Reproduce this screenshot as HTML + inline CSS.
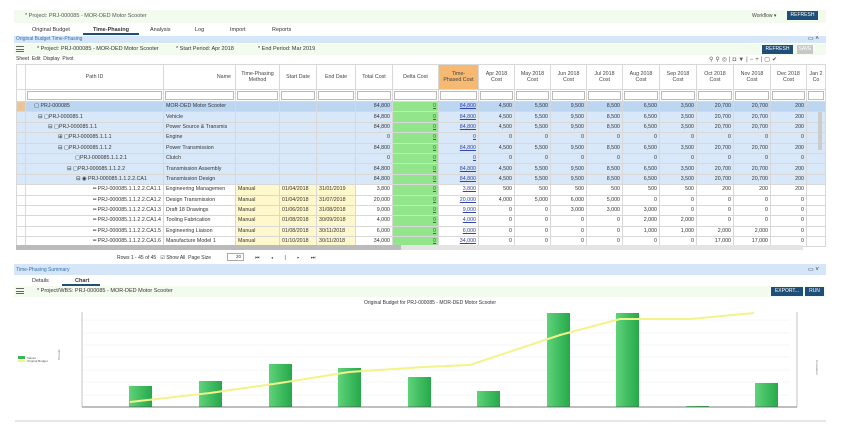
<!DOCTYPE html>
<html><head><meta charset="utf-8"><style>
*{margin:0;padding:0;box-sizing:border-box}
body{width:848px;height:441px;background:#fff;font-family:"Liberation Sans",sans-serif;font-size:5.5px;color:#333;position:relative;overflow:hidden}
.a{position:absolute;white-space:nowrap}
.btn{position:absolute;background:#1f4e79;color:#fff;font-size:5px;text-align:center;line-height:9px}
table{position:absolute;left:16px;top:64px;width:809px;border-collapse:collapse;table-layout:fixed;font-size:5.3px}
td,th{border:1px solid #d8d8d8;overflow:hidden;white-space:nowrap;padding:0 2px}
th{font-weight:normal;height:25px;color:#444;text-align:center;line-height:6.5px;background:#fff;white-space:normal;padding:0 4px}
tr.f td{height:12px;padding:1px}
tr.f td div{border:1px solid #bbb;height:9px;background:#fff}
tr.d td{height:10.4px;text-align:right;line-height:9px}
tr.b td{background:#d9e8f8}
tr.b1 td{background:#bcd6f2}
td.l{text-align:left!important}
td.g{background:#93e58c!important;color:#2a7a2a;text-decoration:underline}
td.u{color:#3344aa;text-decoration:underline}
td.y{background:#fff8cc!important;text-align:left!important}
</style></head><body>
<div class="a" style="left:14px;top:10px;width:812px;height:13px;background:#f3fbef"></div>
<div class="a" style="left:25px;top:13px;color:#555">* Project: PRJ-000085 - MOR-DED Motor Scooter</div>
<div class="a" style="left:752px;top:13px;color:#444;font-size:5px">Workflow ▾</div>
<div class="btn" style="left:787px;top:11px;width:31px">REFRESH</div>
<div class="a" style="left:32px;top:27px">Original Budget</div>
<div class="a" style="left:93px;top:27px;font-weight:bold">Time-Phasing</div>
<div class="a" style="left:83px;top:33px;width:56px;height:2px;background:#1f4e79"></div>
<div class="a" style="left:150px;top:27px">Analysis</div>
<div class="a" style="left:195px;top:27px">Log</div>
<div class="a" style="left:230px;top:27px">Import</div>
<div class="a" style="left:272px;top:27px">Reports</div>
<div class="a" style="left:14px;top:36px;width:812px;height:7px;background:#d5e6f8"></div>
<div class="a" style="left:16px;top:36px;color:#3a6fb0;font-size:5px">Original Budget Time-Phasing</div>
<div class="a" style="left:808px;top:35px;font-size:6px">▭ ˄</div>
<div class="a" style="left:14px;top:44px;width:812px;height:11px;background:#f3fbef"></div>
<div class="a" style="left:16px;top:46px;width:8px;height:6px;border-top:1px solid #666;border-bottom:1px solid #666"><div style="margin-top:1.5px;border-top:1px solid #666"></div></div>
<div class="a" style="left:37px;top:46px">* Project: PRJ-000085 - MOR-DED Motor Scooter</div>
<div class="a" style="left:176px;top:46px">* Start Period: Apr 2018</div>
<div class="a" style="left:258px;top:46px">* End Period: Mar 2019</div>
<div class="btn" style="left:762px;top:45px;width:31px">REFRESH</div>
<div class="btn" style="left:797px;top:45px;width:16px;background:#c8c8c8">SAVE</div>
<div class="a" style="left:16px;top:56px;font-size:5px">Sheet &nbsp;Edit &nbsp;Display &nbsp;Pivot</div>
<div class="a" style="left:709px;top:56px;font-size:6px;color:#555;letter-spacing:2px">⚲⚲◎|◘▼|−+|▢✔</div>
<table>
<colgroup><col style="width:9px"><col style="width:138px"><col style="width:72px"><col style="width:44px"><col style="width:37px"><col style="width:39px"><col style="width:37px"><col style="width:46px"><col style="width:40px"><col style="width:36px"><col style="width:36px"><col style="width:36px"><col style="width:36px"><col style="width:37px"><col style="width:37px"><col style="width:37px"><col style="width:37px"><col style="width:36px"><col style="width:19px"></colgroup>
<tr><th></th><th>Path ID</th><th style="text-align:right">Name</th><th>Time-Phasing Method</th><th>Start Date</th><th>End Date</th><th>Total Cost</th><th>Delta Cost</th><th style="background:#f5b971">Time-Phased Cost</th><th>Apr 2018 Cost</th><th>May 2018 Cost</th><th>Jun 2018 Cost</th><th>Jul 2018 Cost</th><th>Aug 2018 Cost</th><th>Sep 2018 Cost</th><th>Oct 2018 Cost</th><th>Nov 2018 Cost</th><th>Dec 2018 Cost</th><th style="padding:0 1px">Jan 2 Co</th></tr>
<tr class="f"><td></td><td><div></div></td><td><div></div></td><td><div></div></td><td><div></div></td><td><div></div></td><td><div></div></td><td><div></div></td><td><div></div></td><td><div></div></td><td><div></div></td><td><div></div></td><td><div></div></td><td><div></div></td><td><div></div></td><td><div></div></td><td><div></div></td><td><div></div></td><td><div></div></td></tr>
<tr class="d b1"><td style="background:#e8c49a!important"></td><td class="l" style="padding-left:8px">▢ PRJ-000085</td><td class="l">MOR-DED Motor Scooter</td><td></td><td></td><td></td><td>84,800</td><td class="g">0</td><td class="u">84,800</td><td>4,500</td><td>5,500</td><td>9,500</td><td>8,500</td><td>6,500</td><td>3,500</td><td>20,700</td><td>20,700</td><td>200</td><td></td></tr>
<tr class="d b"><td></td><td class="l" style="padding-left:12px">⊟ ▢PRJ-000085.1</td><td class="l">Vehicle</td><td></td><td></td><td></td><td>84,800</td><td class="g">0</td><td class="u">84,800</td><td>4,500</td><td>5,500</td><td>9,500</td><td>8,500</td><td>6,500</td><td>3,500</td><td>20,700</td><td>20,700</td><td>200</td><td></td></tr>
<tr class="d b"><td></td><td class="l" style="padding-left:22px">⊟ ▢PRJ-000085.1.1</td><td class="l">Power Source &amp; Transmis</td><td></td><td></td><td></td><td>84,800</td><td class="g">0</td><td class="u">84,800</td><td>4,500</td><td>5,500</td><td>9,500</td><td>8,500</td><td>6,500</td><td>3,500</td><td>20,700</td><td>20,700</td><td>200</td><td></td></tr>
<tr class="d b"><td></td><td class="l" style="padding-left:32px">⊞ ▢PRJ-000085.1.1.1</td><td class="l">Engine</td><td></td><td></td><td></td><td>0</td><td class="g">0</td><td class="u">0</td><td>0</td><td>0</td><td>0</td><td>0</td><td>0</td><td>0</td><td>0</td><td>0</td><td>0</td><td></td></tr>
<tr class="d b"><td></td><td class="l" style="padding-left:32px">⊟ ▢PRJ-000085.1.1.2</td><td class="l">Power Transmission</td><td></td><td></td><td></td><td>84,800</td><td class="g">0</td><td class="u">84,800</td><td>4,500</td><td>5,500</td><td>9,500</td><td>8,500</td><td>6,500</td><td>3,500</td><td>20,700</td><td>20,700</td><td>200</td><td></td></tr>
<tr class="d b"><td></td><td class="l" style="padding-left:49px">▢PRJ-000085.1.1.2.1</td><td class="l">Clutch</td><td></td><td></td><td></td><td>0</td><td class="g">0</td><td class="u">0</td><td>0</td><td>0</td><td>0</td><td>0</td><td>0</td><td>0</td><td>0</td><td>0</td><td>0</td><td></td></tr>
<tr class="d b"><td></td><td class="l" style="padding-left:41px">⊟ ▢PRJ-000085.1.1.2.2</td><td class="l">Transmission Assembly</td><td></td><td></td><td></td><td>84,800</td><td class="g">0</td><td class="u">84,800</td><td>4,500</td><td>5,500</td><td>9,500</td><td>8,500</td><td>6,500</td><td>3,500</td><td>20,700</td><td>20,700</td><td>200</td><td></td></tr>
<tr class="d b"><td></td><td class="l" style="padding-left:50px">⊟ ◉ PRJ-000085.1.1.2.2.CA1</td><td class="l">Transmission Design</td><td></td><td></td><td></td><td>84,800</td><td class="g">0</td><td class="u">84,800</td><td>4,500</td><td>5,500</td><td>9,500</td><td>8,500</td><td>6,500</td><td>3,500</td><td>20,700</td><td>20,700</td><td>200</td><td></td></tr>
<tr class="d"><td></td><td>━ PRJ-000085.1.1.2.2.CA1.1</td><td class="l">Engineering Managemen</td><td class="y">Manual</td><td class="y">01/04/2018</td><td class="y">31/01/2019</td><td>3,800</td><td class="g">0</td><td class="u">3,800</td><td>500</td><td>500</td><td>500</td><td>500</td><td>500</td><td>500</td><td>200</td><td>200</td><td>200</td><td></td></tr>
<tr class="d"><td></td><td>━ PRJ-000085.1.1.2.2.CA1.2</td><td class="l">Design Transmission</td><td class="y">Manual</td><td class="y">01/04/2018</td><td class="y">31/07/2018</td><td>20,000</td><td class="g">0</td><td class="u">20,000</td><td>4,000</td><td>5,000</td><td>6,000</td><td>5,000</td><td>0</td><td>0</td><td>0</td><td>0</td><td>0</td><td></td></tr>
<tr class="d"><td></td><td>━ PRJ-000085.1.1.2.2.CA1.3</td><td class="l">Draft 18 Drawings</td><td class="y">Manual</td><td class="y">01/06/2018</td><td class="y">31/08/2018</td><td>9,000</td><td class="g">0</td><td class="u">9,000</td><td>0</td><td>0</td><td>3,000</td><td>3,000</td><td>3,000</td><td>0</td><td>0</td><td>0</td><td>0</td><td></td></tr>
<tr class="d"><td></td><td>━ PRJ-000085.1.1.2.2.CA1.4</td><td class="l">Tooling Fabrication</td><td class="y">Manual</td><td class="y">01/08/2018</td><td class="y">30/09/2018</td><td>4,000</td><td class="g">0</td><td class="u">4,000</td><td>0</td><td>0</td><td>0</td><td>0</td><td>2,000</td><td>2,000</td><td>0</td><td>0</td><td>0</td><td></td></tr>
<tr class="d"><td></td><td>━ PRJ-000085.1.1.2.2.CA1.5</td><td class="l">Engineering Liaison</td><td class="y">Manual</td><td class="y">01/08/2018</td><td class="y">30/11/2018</td><td>6,000</td><td class="g">0</td><td class="u">6,000</td><td>0</td><td>0</td><td>0</td><td>0</td><td>1,000</td><td>1,000</td><td>2,000</td><td>2,000</td><td>0</td><td></td></tr>
<tr class="d"><td></td><td>━ PRJ-000085.1.1.2.2.CA1.6</td><td class="l">Manufacture Model 1</td><td class="y">Manual</td><td class="y">01/10/2018</td><td class="y">30/11/2018</td><td>34,000</td><td class="g">0</td><td class="u">34,000</td><td>0</td><td>0</td><td>0</td><td>0</td><td>0</td><td>0</td><td>17,000</td><td>17,000</td><td>0</td><td></td></tr>
</table>
<div class="a" style="left:16px;top:245px;width:385px;height:5px;background:#bbb"></div>
<div class="a" style="left:401px;top:245px;width:402px;height:5px;background:#e4e4e4"></div>
<div class="a" style="left:818px;top:112px;width:4px;height:38px;background:#ccc"></div>
<div class="a" style="left:117px;top:255px;font-size:5px">Rows 1 - 45 of 45 &nbsp; ☑ Show All &nbsp;Page Size</div>
<div class="a" style="left:227px;top:253px;width:17px;height:8px;border:1px solid #aaa;font-size:4.5px;text-align:right;padding-right:2px">20</div>
<div class="a" style="left:255px;top:255px;font-size:5px;letter-spacing:5px">⏮ ◂ | ▸ ⏭</div>
<div class="a" style="left:14px;top:264px;width:812px;height:11px;background:#d5e6f8"></div>
<div class="a" style="left:16px;top:267px;color:#3a6fb0;font-size:5px">Time-Phasing Summary</div>
<div class="a" style="left:808px;top:266px;font-size:6px">▭ ˅</div>
<div class="a" style="left:32px;top:278px">Details</div>
<div class="a" style="left:75px;top:278px;font-weight:bold">Chart</div>
<div class="a" style="left:62px;top:284px;width:38px;height:2px;background:#1f4e79"></div>
<div class="a" style="left:14px;top:286px;width:812px;height:11px;background:#f3fbef"></div>
<div class="a" style="left:16px;top:288px;width:8px;height:6px;border-top:1px solid #666;border-bottom:1px solid #666"><div style="margin-top:1.5px;border-top:1px solid #666"></div></div>
<div class="a" style="left:37px;top:288px">* Project/WBS: PRJ-000085 - MOR-DED Motor Scooter</div>
<div class="btn" style="left:771px;top:287px;width:32px">EXPORT...</div>
<div class="btn" style="left:805px;top:287px;width:19px">RUN</div>
<svg class="a" style="left:0;top:0" width="848" height="441">
<text x="430" y="304" font-size="5" text-anchor="middle" fill="#333" font-family="Liberation Sans">Original Budget for PRJ-000085 - MOR-DED Motor Scooter</text>
<defs><linearGradient id="g" x1="0" x2="1"><stop offset="0" stop-color="#5fd37a"/><stop offset="1" stop-color="#26a84a"/></linearGradient></defs>
<g stroke="#eee" stroke-width="0.5"><line x1="82" y1="320" x2="790" y2="320"/><line x1="82" y1="333" x2="790" y2="333"/><line x1="82" y1="345" x2="790" y2="345"/><line x1="82" y1="357" x2="790" y2="357"/><line x1="82" y1="370" x2="790" y2="370"/><line x1="82" y1="382" x2="790" y2="382"/><line x1="82" y1="395" x2="790" y2="395"/></g>
<line x1="82" y1="312" x2="82" y2="407" stroke="#888" stroke-width="0.5"/>
<line x1="797" y1="312" x2="797" y2="407" stroke="#888" stroke-width="0.5"/>
<g fill="url(#g)">
<rect x="129" y="386" width="23" height="21"/><rect x="199" y="381" width="23" height="26"/><rect x="269" y="364" width="23" height="43"/><rect x="338" y="368" width="23" height="39"/><rect x="408" y="377" width="23" height="30"/><rect x="477" y="391" width="23" height="16"/><rect x="547" y="313" width="23" height="94"/><rect x="616" y="313" width="23" height="94"/><rect x="686" y="406" width="23" height="1"/><rect x="755" y="383" width="23" height="24"/></g>
<polyline points="130,402 210,393 280,383 349,372 424,367 470,365 560,335 620,319 690,319 754,313" fill="none" stroke="#f3f38a" stroke-width="2"/>
<line x1="82" y1="407" x2="797" y2="407" stroke="#555" stroke-width="0.8"/>
<line x1="15" y1="421" x2="826" y2="421" stroke="#999" stroke-width="0.6"/>
<rect x="18" y="356" width="7" height="3" fill="#3bb55a"/><text x="27" y="359" font-size="3" fill="#555">Values</text>
<line x1="18" y1="361" x2="25" y2="361" stroke="#f3f38a" stroke-width="2"/><text x="27" y="362" font-size="3" fill="#555">Original Budget</text>
<text x="60" y="360" font-size="3" fill="#777" transform="rotate(-90 60 360)">Periodic</text>
<text x="816" y="360" font-size="3" fill="#777" transform="rotate(90 816 360)">Cumulative</text>
</svg>
</body></html>
